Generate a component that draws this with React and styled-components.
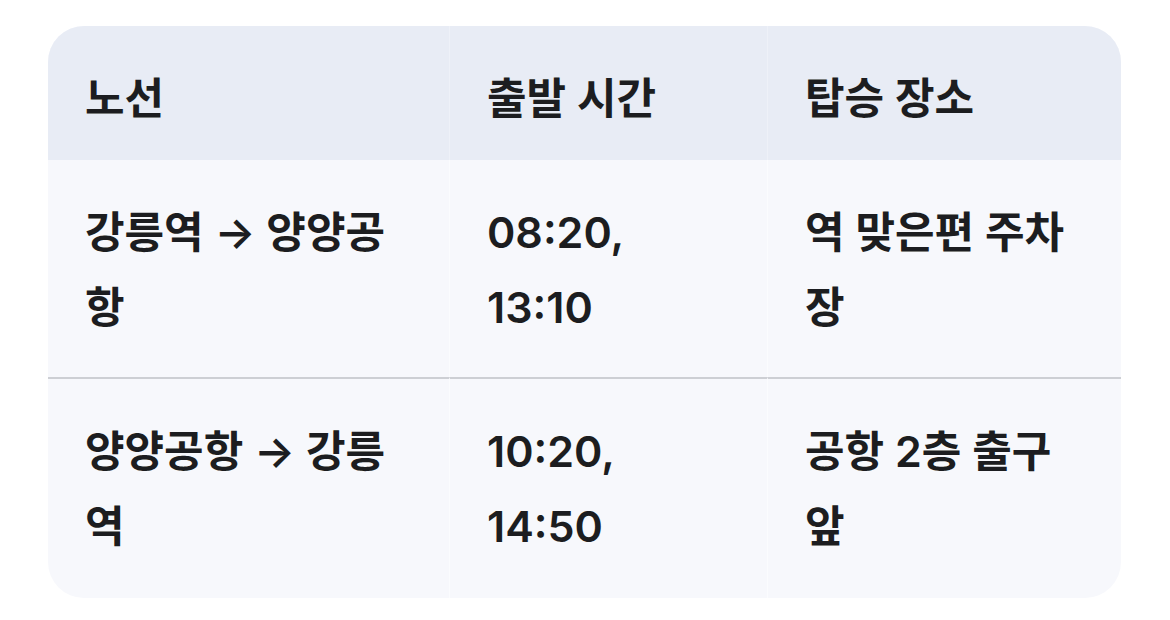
import styled, { createGlobalStyle } from 'styled-components'

const GlobalStyle = createGlobalStyle`
  body {
    margin: 0;
    background: #ffffff;
    font-family: "Inter", "Noto Sans CJK KR", sans-serif;
  }
`

const Page = styled.div`
  padding: 26px 49px 0 48px;
`

const Table = styled.table`
  width: 1073px;
  table-layout: fixed;
  border-collapse: separate;
  border-spacing: 0;
  border-radius: 36px;
  overflow: hidden;
  background: #f7f8fc;
`

const HeadCell = styled.th`
  background: #e8ecf5;
  text-align: left;
  padding: 35px 37px 24px 37px;
  font-size: 43px;
  line-height: 75px;
  font-weight: 600;
  color: #1c1d20;
  border-left: ${({ first }) => (first ? 'none' : '1px solid #eef1f8')};
`

const Cell = styled.td`
  padding: 35px 37px ${({ last }) => (last ? '34px' : '32px')} 37px;
  font-size: 43px;
  line-height: 75px;
  font-weight: 600;
  color: #1c1d20;
  vertical-align: top;
  border-left: ${({ first }) => (first ? 'none' : '1px solid #fbfcfe')};
  border-top: ${({ divided }) => (divided ? '2px solid #cdcfd4' : 'none')};
`

const columns = [401, 318, 354]
const headers = ['노선', '출발 시간', '탑승 장소']
const rows = [
  ['강릉역 → 양양공항', '08:20, 13:10', '역 맞은편 주차장'],
  ['양양공항 → 강릉역', '10:20, 14:50', '공항 2층 출구 앞'],
]

export default function App() {
  return (
    <>
      <GlobalStyle />
      <Page>
        <Table>
          <colgroup>
            {columns.map((w, i) => (
              <col key={i} style={{ width: w }} />
            ))}
          </colgroup>
          <thead>
            <tr>
              {headers.map((h, i) => (
                <HeadCell key={h} first={i === 0}>{h}</HeadCell>
              ))}
            </tr>
          </thead>
          <tbody>
            {rows.map((row, r) => (
              <tr key={r}>
                {row.map((c, i) => (
                  <Cell
                    key={i}
                    first={i === 0}
                    divided={r > 0}
                    last={r === rows.length - 1}
                  >
                    {c}
                  </Cell>
                ))}
              </tr>
            ))}
          </tbody>
        </Table>
      </Page>
    </>
  )
}
